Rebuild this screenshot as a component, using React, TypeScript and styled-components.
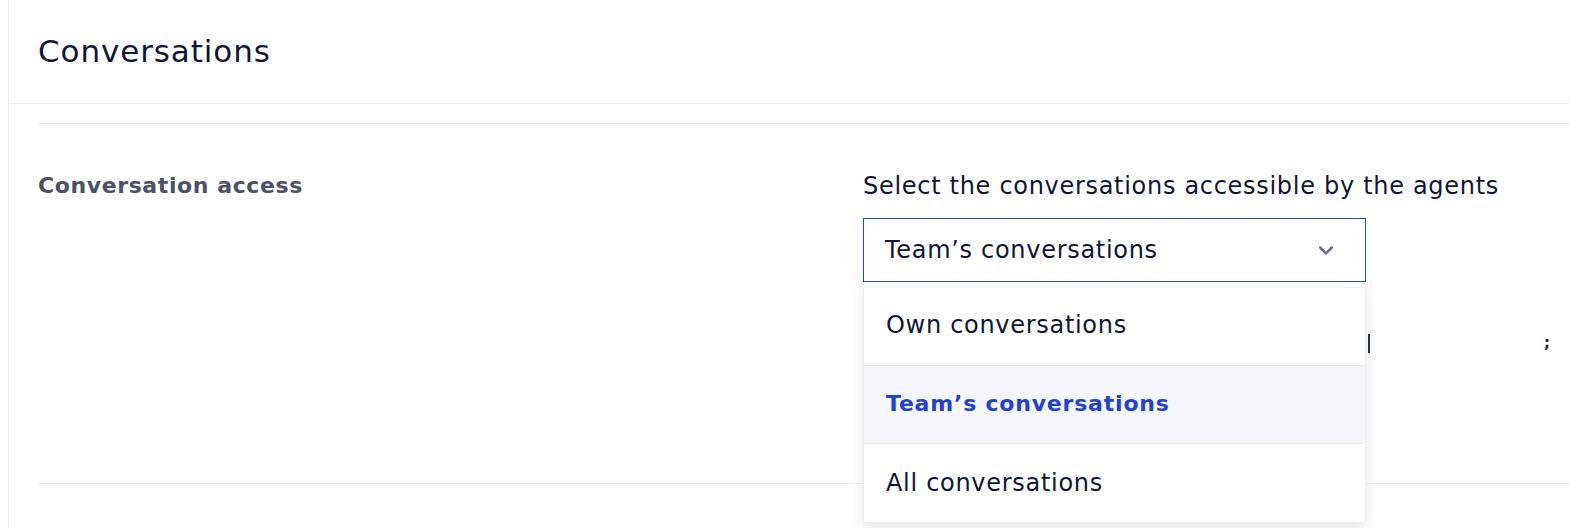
import React from 'react';
import styled, { createGlobalStyle } from 'styled-components';

const GlobalStyle = createGlobalStyle`
  html, body {
    margin: 0;
    padding: 0;
    background: #ffffff;
  }
  body {
    font-family: "DejaVu Sans", Verdana, sans-serif;
    color: #0f1633;
  }
  * { box-sizing: border-box; }
`;

const Page = styled.div`
  margin-left: 8px;
  min-height: 528px;
  border-left: 1px solid #ededed;
  background: #fff;
`;

const Header = styled.header`
  height: 104px;
  display: flex;
  align-items: center;
  padding: 0 0 2px 29px;
  border-bottom: 1px solid #ededed;
`;

const Title = styled.h1`
  margin: 0;
  font-size: 31px;
  font-weight: 400;
  letter-spacing: 0.9px;
  color: #0f1633;
`;

const Body = styled.div`
  padding: 19px 0 0 29px;
`;

const Section = styled.section`
  display: grid;
  grid-template-columns: 825px 1fr;
  height: 361px;
  padding-top: 48px;
  border-top: 1px solid #ededed;
  border-bottom: 1px solid #ededed;
`;

const Label = styled.h3`
  margin: 0;
  font-size: 22px;
  line-height: 28px;
  font-weight: 700;
  color: #4b5166;
  letter-spacing: 0.6px;
`;

const Field = styled.div`
  position: relative;
`;

const Hint = styled.p`
  margin: 0 0 18px;
  font-size: 24px;
  line-height: 28px;
  color: #0f1633;
  letter-spacing: 0.7px;
`;

const SelectBox = styled.button`
  width: 503px;
  height: 64px;
  display: flex;
  align-items: center;
  justify-content: space-between;
  padding: 0 29px 0 21px;
  background: #fff;
  border: 1px solid #1f47e6;
  font-family: inherit;
  font-size: 24px;
  color: #0f1633;
  letter-spacing: 0.7px;
  cursor: pointer;
  text-align: left;
`;

const Menu = styled.ul`
  position: absolute;
  left: 0;
  top: 115px;
  width: 503px;
  margin: 0;
  padding: 0;
  list-style: none;
  background: #fff;
  border: 1px solid #eceef3;
  box-shadow: 0 4px 12px rgba(30, 40, 70, 0.12);
  z-index: 2;
`;

const Option = styled.li<{ $active?: boolean }>`
  height: 78px;
  display: flex;
  align-items: center;
  padding: 0 0 3px 22px;
  font-size: ${(p) => (p.$active ? '22px' : '24px')};
  letter-spacing: ${(p) => (p.$active ? '0.8px' : '0.7px')};
  font-weight: ${(p) => (p.$active ? 700 : 400)};
  color: ${(p) => (p.$active ? '#1c41de' : '#0f1633')};
  background: ${(p) => (p.$active ? '#f5f7fc' : '#fff')};
  border-bottom: 1px solid #e6e9f0;
  &:last-child {
    border-bottom: none;
    padding-bottom: 0;
  }
`;

const Peek = styled.div`
  position: absolute;
  top: 160px;
  left: 505px;
  width: 182px;
  height: 22px;
  display: flex;
  justify-content: space-between;
  align-items: center;
`;

const PeekBar = styled.span`
  width: 2px;
  height: 19px;
  background: #2b2f45;
`;

const PeekMark = styled.span`
  font-size: 15px;
  font-weight: 700;
  color: #1d2135;
`;

const Chevron = () => (
  <svg width="20" height="20" viewBox="0 0 24 24" fill="none" stroke="#6b6f80" strokeWidth="3" strokeLinecap="round" strokeLinejoin="round">
    <path d="M5 9l7 7 7-7" />
  </svg>
);

const options = ['Own conversations', 'Team’s conversations', 'All conversations'];

export default function App() {
  const selected = 'Team’s conversations';
  return (
    <>
      <GlobalStyle />
      <Page>
        <Header>
          <Title>Conversations</Title>
        </Header>
        <Body>
          <Section>
            <Label>Conversation access</Label>
            <Field>
              <Hint>Select the conversations accessible by the agents</Hint>
              <SelectBox>
                <span>{selected}</span>
                <Chevron />
              </SelectBox>
              <Peek>
                <PeekBar />
                <PeekMark>;</PeekMark>
              </Peek>
              <Menu>
                {options.map((o) => (
                  <Option key={o} $active={o === selected}>
                    {o}
                  </Option>
                ))}
              </Menu>
            </Field>
          </Section>
        </Body>
      </Page>
    </>
  );
}
